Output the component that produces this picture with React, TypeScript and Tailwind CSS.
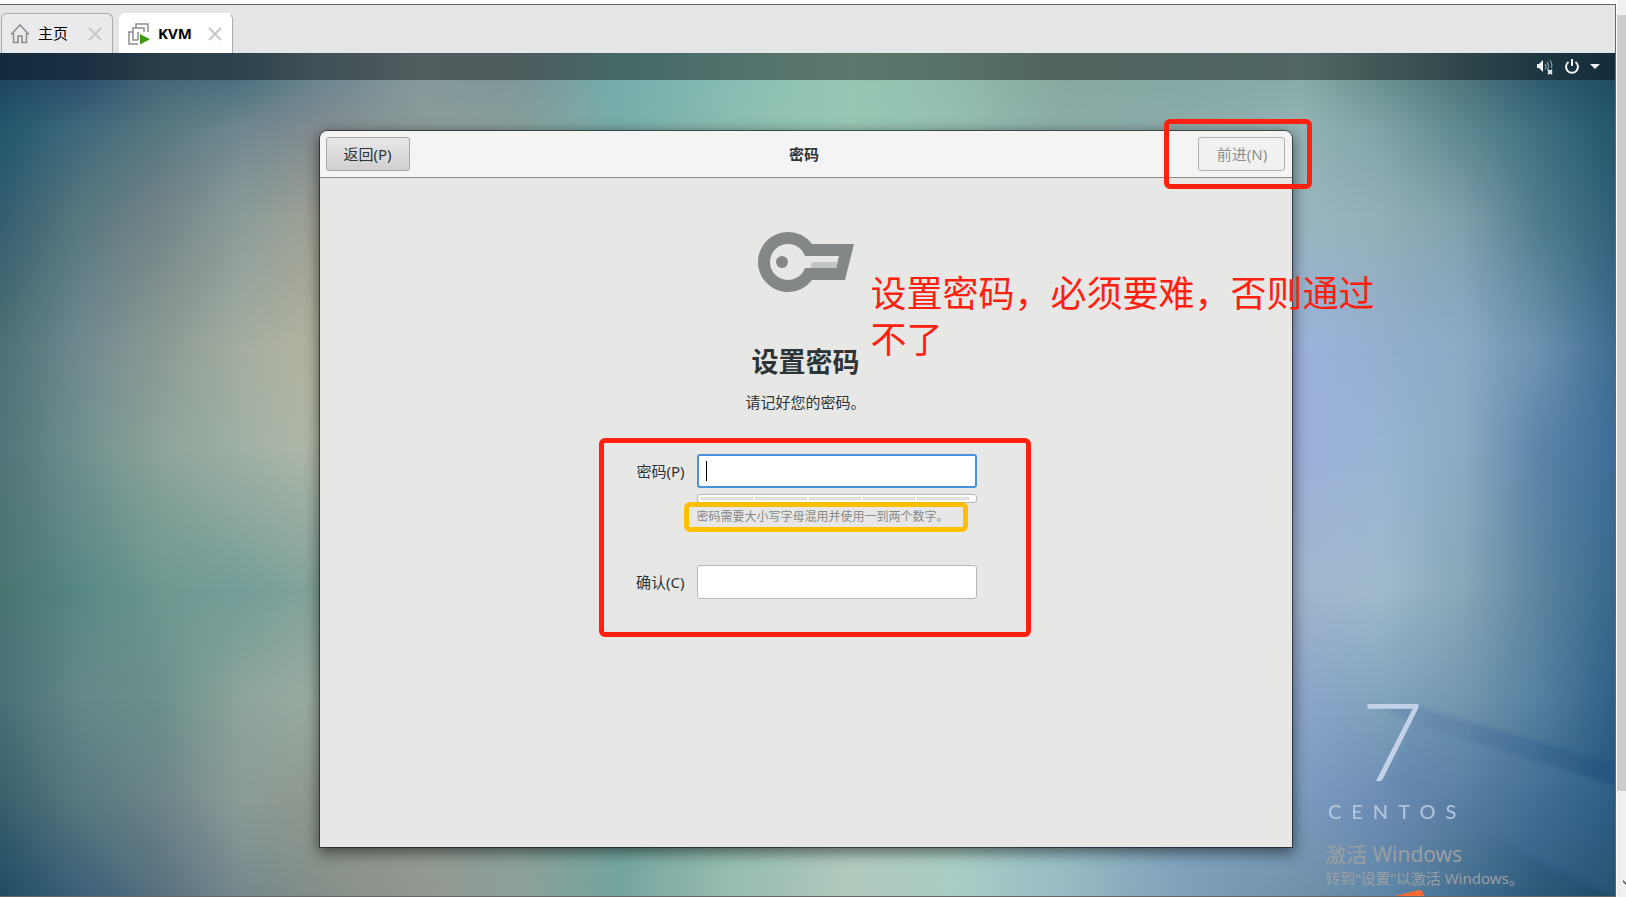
import React, { ReactNode, useState } from "react";

// colour stops of the wallpaper, one row of stops for each height
const STOPS = [0, 80, 160, 240, 320, 420, 520, 620, 730, 850, 960, 1060, 1180, 1300, 1380, 1460, 1540, 1615];

const ROWS = [
  {
    y: 80,
    colors: ["#1f4763", "#2c5070", "#456878", "#4c7080", "#6c8690", "#869a9c", "#7f989a", "#74aeac", "#88bcb4", "#98c8b4", "#90bcac", "#88a8a0", "#84a8a4", "#88aca8", "#6a9290", "#50787e", "#305c70", "#1f4c60"],
  },
  {
    y: 131,
    colors: ["#22566c", "#406a7c", "#587880", "#708890", "#848c90", "#8c9a98", "#86a09c", "#78aca8", "#8cbcb0", "#98c8b4", "#94beb2", "#8caca8", "#8cacaa", "#94b4b4", "#80a4a8", "#5f8a92", "#407080", "#24566c"],
  },
  {
    y: 220,
    colors: ["#345e70", "#58787f", "#748488", "#8c9c9a", "#a0a294", "#a0a898", "#90aca0", "#88b4a8", "#94c0b0", "#98c8b4", "#98c0b8", "#94b4b4", "#94b4ba", "#98b6c0", "#94b0b8", "#80a0ac", "#4f7c8c", "#305f78"],
  },
  {
    y: 350,
    colors: ["#4c7074", "#708a90", "#8c9a94", "#a4aea0", "#b4b4a0", "#b0b4a4", "#a0b4a4", "#94b8a8", "#98c0b0", "#98c8b4", "#98c0c0", "#98b8c8", "#9cb4d4", "#9cb2dc", "#94aed0", "#8cacc8", "#6c92b0", "#3f6c90"],
  },
  {
    y: 450,
    colors: ["#507478", "#70908f", "#8ca49a", "#a0b0a4", "#b0b8a8", "#acb8a8", "#a0b8a8", "#94b8a8", "#98c0b0", "#98c8b4", "#98c0c0", "#98b8c8", "#9cb4d4", "#9cb0dc", "#98b4d4", "#8cacc4", "#5c84a8", "#3e6c98"],
  },
  {
    y: 590,
    colors: ["#487470", "#588884", "#6c9890", "#749e98", "#84a49c", "#8caca0", "#8cb0a4", "#90b4a8", "#98c0b0", "#98c8b4", "#98c0c0", "#98b8c8", "#9cb8cc", "#a0b6cc", "#a0bacc", "#88a8b8", "#5c84a0", "#38688a"],
  },
  {
    y: 700,
    colors: ["#487078", "#648888", "#6c908c", "#8ca49c", "#9caca0", "#98aca0", "#90aca0", "#88b0a8", "#98c0b0", "#a0c8b8", "#a0c4c0", "#98b8c8", "#90acc8", "#8ca4cc", "#80a4bc", "#7498b0", "#5480a0", "#305f86"],
  },
  {
    y: 800,
    colors: ["#38606c", "#587880", "#6c8488", "#8c9c98", "#90988c", "#909c90", "#88a09a", "#74a8a0", "#90bab0", "#b0ccc0", "#a8ccc4", "#98bcc4", "#84a4c0", "#7c9cc0", "#6c8cb4", "#5c80a0", "#3f6a8c", "#25557a"],
  },
  {
    y: 896,
    colors: ["#204c64", "#3c6078", "#587080", "#74888c", "#848e88", "#949890", "#8ca09a", "#74a49e", "#98bcb0", "#b0c8bc", "#a8ccc4", "#98bcc4", "#80a0b8", "#7090a8", "#6088a8", "#446f90", "#2c5878", "#1f4a64"],
  },
];

function Wallpaper() {
  return (
    <svg
      className="absolute inset-0 h-full w-full"
      viewBox="0 53 1615 843"
      preserveAspectRatio="none"
      aria-hidden="true"
    >
      <defs>
        {ROWS.map((row, i) => (
          <React.Fragment key={row.y}>
            <linearGradient id={`row-${i}`} gradientUnits="userSpaceOnUse" x1="0" x2="1615" y1="0" y2="0">
              {row.colors.map((c, n) => (
                <stop key={n} offset={STOPS[n] / 1615} stopColor={c} />
              ))}
            </linearGradient>
            {i > 0 && (
              <>
                <linearGradient
                  id={`fade-${i}`}
                  gradientUnits="userSpaceOnUse"
                  x1="0"
                  x2="0"
                  y1={ROWS[i - 1].y}
                  y2={row.y}
                >
                  <stop offset="0" stopColor="#fff" stopOpacity="0" />
                  <stop offset="1" stopColor="#fff" />
                </linearGradient>
                <mask id={`mask-${i}`} maskUnits="userSpaceOnUse" x="0" y="0" width="1615" height="900">
                  <rect width="1615" height="900" fill={`url(#fade-${i})`} />
                </mask>
              </>
            )}
          </React.Fragment>
        ))}
        <linearGradient id="beam" x1="0" x2="1" y1="0" y2="0">
          <stop offset="0" stopColor="#5c80ae" stopOpacity="0.3" />
          <stop offset="1" stopColor="#1e4d80" stopOpacity="0.5" />
        </linearGradient>
        <filter id="soft">
          <feGaussianBlur stdDeviation="2" />
        </filter>
      </defs>
      {ROWS.map((row, i) => (
        <rect
          key={row.y}
          y="53"
          width="1615"
          height="843"
          fill={`url(#row-${i})`}
          mask={i > 0 ? `url(#mask-${i})` : undefined}
        />
      ))}
      <g filter="url(#soft)">
        <path d="M1380 708l37-2 198 58v22l-203-63z" fill="url(#beam)" />
        <path d="M1412 723l203 63v110l-230-113z" fill="#5076ac" opacity="0.2" />
        <path d="M1440 808l175 84h-20l-165-72z" fill="url(#beam)" opacity="0.5" />
      </g>
    </svg>
  );
}

function HomeIcon() {
  return (
    <svg width="20" height="20" viewBox="0 0 20 20" fill="none" stroke="#8b8d8f" strokeWidth="1.6">
      <path d="M1 10.500 10 1l9 9.500M3.500 9v9.500H8V12h4v6.500h4.500V9" />
    </svg>
  );
}

function VmIcon() {
  return (
    <svg width="22" height="22" viewBox="0 0 22 22">
      <g fill="none" stroke="#8b8d8f" strokeWidth="1.5">
        <path d="M8 5V1h12v8" />
        <path d="M10 17H5V5h11v4" />
        <path d="M5 9H1v12h9M10 9v8" />
      </g>
      <path d="M12 11v10.500l10-5.200z" fill="#3f9b0e" />
    </svg>
  );
}

function CloseIcon() {
  return (
    <svg width="14" height="14" viewBox="0 0 14 14" stroke="#c8c8c8" strokeWidth="2">
      <path d="M1 1l12 12M13 1L1 13" />
    </svg>
  );
}

interface TabProps {
  label: string;
  icon: ReactNode;
  active?: boolean;
}

function Tab({ label, icon, active }: TabProps) {
  return (
    <div
      className={`flex h-10 items-center rounded-t-md border border-b-0 border-[#a9abad] pr-2.5 pl-2 ${
        active ? "border-t-white border-l-white bg-white" : "bg-[#e9eaec]"
      }`}
    >
      <button type="button" className="flex items-center gap-2 text-[15px] text-black">
        {icon}
        <span className={active ? "font-bold" : ""}>{label}</span>
      </button>
      <button type="button" className={active ? "ml-4" : "ml-5"} aria-label={`关闭 ${label}`}>
        <CloseIcon />
      </button>
    </div>
  );
}

function StatusIcons() {
  return (
    <div className="flex h-[27px] items-center justify-end gap-2.5 bg-black/40 pr-[15px]">
      <svg width="18" height="18" viewBox="0 0 18 18">
        <path d="M1 6h2l4-4v12l-4-4H1z" fill="#f2f2f2" />
        <path d="M9 6q2 2.500 0 5M11 4q3 4 0 8M14 2q3 5 1 8" fill="none" stroke="#80969d" strokeWidth="1.3" />
        <path d="M12 12l4 4M16 12l-4 4" stroke="#f2f2f2" strokeWidth="1.8" />
      </svg>
      <svg width="16" height="16" viewBox="0 0 16 16" fill="none" stroke="#f2f2f2" strokeWidth="2">
        <path d="M4.500 3a6 6 0 1 0 7 0M8 0v7" />
      </svg>
      <svg width="10" height="5" viewBox="0 0 10 5">
        <path d="M0 0h10L5 5z" fill="#f2f2f2" />
      </svg>
    </div>
  );
}

function KeyIcon() {
  return (
    <svg width="96" height="60" viewBox="0 0 96 60" className="mx-auto">
      <path
        fill="#838787"
        fillRule="evenodd"
        d="M30 0a30 30 0 1 0 24 48h33l9-36H54A30 30 0 0 0 30 0zM30 12a18 18 0 0 1 17 12h34l-3 12H47A18 18 0 1 1 30 12z"
      />
      <path d="M54 30h26l-2 6H52z" fill="#c3c5c4" />
      <circle cx="24" cy="30" r="6" fill="#838787" />
    </svg>
  );
}

function PasswordForm() {
  const [password, setPassword] = useState("");
  const [confirm, setConfirm] = useState("");

  return (
    <form className="mt-6 ml-[279px] grid w-[432px] grid-cols-[81px_280px] gap-x-3 rounded-md border-5 border-[#ff2010] pt-[11px] pb-[33px]">
      <label htmlFor="password" className="self-center text-right">
        密码(P)
      </label>
      <div className="relative">
        <input
          id="password"
          type="password"
          className="block h-[34px] w-full rounded-[3px] border-2 border-[#4a90d9] bg-white px-2 outline-none"
          value={password}
          onChange={(e) => setPassword(e.target.value)}
        />
        {password === "" && <span className="absolute top-[7px] left-[9px] h-5 w-px bg-black" />}
      </div>
      <div className="col-start-2 mt-1.5 flex h-[9px] items-center gap-0.5 rounded-[3px] border border-[#b6b6b3] bg-white pr-[7px] pl-[3px]">
        {[1, 2, 3, 4, 5].map((n) => (
          <span key={n} className="h-[3px] flex-1 border border-[#d2d3d6] bg-[#f0f0f0]" />
        ))}
      </div>
      <div className="relative col-start-2 mt-1 text-xs leading-5 text-[#878a89]">
        密码需要大小写字母混用并使用一到两个数字。
        <span className="absolute -top-[5px] -left-[13px] h-[30px] w-[284px] rounded-md border-5 border-[#ffbf00]" />
      </div>
      <label htmlFor="confirm" className="mt-[38px] self-center text-right">
        确认(C)
      </label>
      <input
        id="confirm"
        type="password"
        className="mt-[38px] h-[34px] rounded-[3px] border border-[#b6b6b3] bg-white px-2 outline-none"
        value={confirm}
        onChange={(e) => setConfirm(e.target.value)}
      />
    </form>
  );
}

function SetupDialog() {
  return (
    <div className="relative flex w-[972px] flex-col rounded-t-lg bg-[#e7e7e6] text-[15px] text-[#2e3436] shadow-[0_0_0_1px_#00000080,0_4px_14px_2px_#00000080]">
      <header className="relative flex h-[47px] items-center justify-between rounded-t-lg border-b border-[#8c8d88] bg-[#f4f4f4] px-1.5">
        <button
          type="button"
          className="h-[34px] w-[84px] rounded-[3px] border border-[#a8a8a6] bg-linear-to-b from-[#e8e8e8] to-[#d0d0d0]"
        >
          返回(P)
        </button>
        <h1 className="font-bold">密码</h1>
        <button
          type="button"
          disabled
          className="h-[34px] w-[87px] rounded-[3px] border border-[#b2b2b0] bg-[#f1f1f1] text-[#8d9091]"
        >
          前进(N)
        </button>
        <span className="absolute -top-3 -right-5 h-[70px] w-[148px] rounded-md border-5 border-[#ff2010]" />
      </header>
      <main className="pt-[54px]">
        <KeyIcon />
        <h2 className="mt-[50px] text-center text-[27px] leading-10 font-bold">设置密码</h2>
        <p className="mt-2 text-center leading-6">请记好您的密码。</p>
        <PasswordForm />
      </main>
      <p className="absolute top-[140px] left-[551px] w-[520px] text-4xl leading-[46px] text-[#ff2010]">
        设置密码，必须要难，否则通过不了
      </p>
    </div>
  );
}

function DesktopMarks() {
  return (
    <>
      <div className="absolute right-[159px] bottom-[71px] w-[128px] text-center text-[#c3d2e6]">
        <div className="font-[Lato] text-[108px] leading-[116px] font-light">7</div>
        <div className="font-[Lato] text-xl leading-7 font-medium tracking-[0.5em] opacity-80">CENTOS</div>
      </div>
      <div className="absolute right-[80px] bottom-2 w-[210px] whitespace-nowrap text-[#9a9fa3]">
        <div className="text-[21px] leading-7">激活 Windows</div>
        <div className="text-[15px] leading-5">转到“设置”以激活 Windows。</div>
      </div>
      <svg className="absolute right-[190px] bottom-0" width="30" height="6" viewBox="0 0 30 6">
        <path d="M0 6L24 0q4 0 5 6z" fill="#ff6a35" />
      </svg>
    </>
  );
}

export default function App() {
  return (
    <div className="flex h-screen overflow-hidden bg-white font-['Noto_Sans','Noto_Sans_CJK_SC',sans-serif]">
      <div className="mt-1 flex min-w-0 flex-1 flex-col border-t border-r border-b border-[#666] bg-[#e4e5e7]">
        <nav className="flex gap-1.5 pt-2 pl-px">
          <Tab label="主页" icon={<HomeIcon />} />
          <Tab label="KVM" icon={<VmIcon />} active />
        </nav>
        <div className="relative flex flex-1 flex-col">
          <Wallpaper />
          <div className="relative flex flex-1 flex-col">
            <StatusIcons />
            <div className="flex flex-1 justify-center pt-[51px] pr-1 pb-[49px]">
              <SetupDialog />
            </div>
            <DesktopMarks />
          </div>
        </div>
      </div>
      <div className="ml-px flex w-[9px] flex-col items-end bg-[#f0f0f0] pt-[15px]">
        <div className="h-[88%] w-full bg-[#cdcdcd]" />
        <svg className="mt-auto mb-3" width="3" height="5" viewBox="0 0 3 5">
          <path d="M0 0l3 3v2L0 2z" fill="#505050" />
        </svg>
      </div>
    </div>
  );
}
